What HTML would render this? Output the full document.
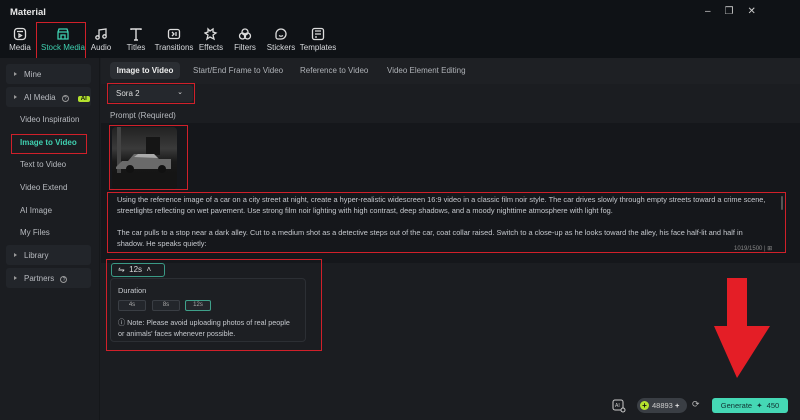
<!DOCTYPE html>
<html><head><meta charset="utf-8"><style>
*{margin:0;padding:0;box-sizing:border-box}
body{width:800px;height:420px;overflow:hidden;background:#1b1d21;font-family:"Liberation Sans",sans-serif;color:#c9ccd1;position:relative;font-size:8px}
.a{position:absolute}
.top{left:0;top:0;width:800px;height:58px;background:#0f1216}
.red{border:1.5px solid #d0202a}
.tb{position:absolute;top:27px;text-align:center;font-size:8px;color:#d8dadd;width:40px}
.tb svg{display:block;margin:0 auto 2px}
.side{left:0;top:58px;width:100px;height:362px;background:#1b1d21;border-right:1px solid #15171a}
.sit{position:absolute;left:6px;width:85px;height:20px;background:#22252a;border-radius:3px;font-size:8px;color:#b8bbc0;padding:6px 0 0 18px}
.sit:before{content:"";position:absolute;left:8px;top:8px;border-left:3px solid #999;border-top:2.5px solid transparent;border-bottom:2.5px solid transparent}
.sl{position:absolute;left:20px;font-size:8px;color:#b8bbc0}
.tab{position:absolute;top:66px;font-size:8px;color:#aeb1b6}
.txt{font-size:7.4px;color:#c6c9ce;line-height:11px;white-space:nowrap}
.db{position:absolute;top:300px;height:11px;width:28px;border:1px solid #3a3e44;border-radius:2px;background:#23262b;font-size:6px;text-align:center;line-height:9px;color:#aaa}
</style></head><body>
<div class="a top"></div>
<div class="a" style="left:10px;top:7px;font-size:9.5px;font-weight:bold;color:#e8e8e8">Material</div>
<div class="a" style="left:705px;top:6px;color:#ccc;font-size:10px;letter-spacing:14px">–❐✕</div>
<div class="tb" style="left:0">
<svg width="14" height="14" viewBox="0 0 14 14" fill="none" stroke="#ddd" stroke-width="1.3"><rect x="1.5" y="1.5" width="11" height="11" rx="3"/><path d="M4 4.5h6M6 7l2.5 1.5L6 10z"/></svg>Media</div>
<div class="tb" style="left:40px;width:46px;color:#3fd0b0">
<svg width="14" height="14" viewBox="0 0 14 14" fill="none" stroke="#3fd0b0" stroke-width="1.3"><path d="M2 5l1-3h8l1 3v7H2zM2 5h10M5 12V8h4v4"/></svg>Stock Media</div>
<div class="a red" style="left:36px;top:22px;width:50px;height:37px"></div>
<div class="tb" style="left:81px">
<svg width="14" height="14" viewBox="0 0 14 14" fill="none" stroke="#ddd" stroke-width="1.3"><path d="M5 10V3l7-1v7"/><circle cx="3.5" cy="10.5" r="1.7"/><circle cx="10.5" cy="9.5" r="1.7"/></svg>Audio</div>
<div class="tb" style="left:116px">
<svg width="14" height="14" viewBox="0 0 14 14" fill="none" stroke="#ddd" stroke-width="1.4"><path d="M2 3V2h10v1M7 2v11M5 13h4"/></svg>Titles</div>
<div class="tb" style="left:153px;width:42px">
<svg width="14" height="14" viewBox="0 0 14 14" fill="none" stroke="#ddd" stroke-width="1.3"><rect x="1.5" y="2.5" width="11" height="9" rx="2"/><path d="M5 5l2 2-2 2M9 5v4"/></svg>Transitions</div>
<div class="tb" style="left:191px">
<svg width="14" height="14" viewBox="0 0 14 14" fill="none" stroke="#ddd" stroke-width="1.3"><path d="M4 2l2 2 3-2v3l3 1-3 2 1 4-4-2-3 2 1-4-3-2 3-1z"/></svg>Effects</div>
<div class="tb" style="left:225px">
<svg width="14" height="14" viewBox="0 0 14 14" fill="none" stroke="#ddd" stroke-width="1.3"><circle cx="7" cy="5" r="3"/><circle cx="4.5" cy="9" r="3"/><circle cx="9.5" cy="9" r="3"/></svg>Filters</div>
<div class="tb" style="left:261px">
<svg width="14" height="14" viewBox="0 0 14 14" fill="none" stroke="#ddd" stroke-width="1.3"><path d="M2 7a5 5 0 1 1 5 5H4a2 2 0 0 1-2-2z"/><path d="M5 8.5q2 1.5 4 0"/></svg>Stickers</div>
<div class="tb" style="left:298px">
<svg width="14" height="14" viewBox="0 0 14 14" fill="none" stroke="#ddd" stroke-width="1.3"><rect x="1.5" y="1.5" width="11" height="11" rx="2"/><path d="M4 4h6M4 7h6M4 10h2"/></svg>Templates</div>

<div class="a side"></div>
<div class="sit" style="top:64px">Mine</div>
<div class="sit" style="top:87px">AI Media <span style="border:1px solid #999;border-radius:50%;display:inline-block;width:7px;height:7px;font-size:5px;text-align:center;line-height:6px;margin-left:4px">?</span><span style="background:#b4e12e;color:#111;font-size:6px;font-weight:bold;border-radius:2px;padding:0 3px;margin-left:9px">AI</span></div>
<div class="sl" style="top:115px">Video Inspiration</div>
<div class="sl" style="top:138px;color:#3fd0b0;font-weight:bold">Image to Video</div>
<div class="a red" style="left:11px;top:134px;width:76px;height:20px"></div>
<div class="sl" style="top:160px">Text to Video</div>
<div class="sl" style="top:183px">Video Extend</div>
<div class="sl" style="top:206px">AI Image</div>
<div class="sl" style="top:228px">My Files</div>
<div class="sit" style="top:245px">Library</div>
<div class="sit" style="top:268px">Partners <span style="border:1px solid #999;border-radius:50%;display:inline-block;width:7px;height:7px;font-size:5px;text-align:center;line-height:6px;margin-left:4px">?</span></div>

<div class="a" style="left:101px;top:58px;width:699px;height:26px;background:#1e2024"></div>
<div class="a" style="left:110px;top:62px;width:70px;height:17px;background:#2b2e33;border-radius:4px;color:#eee;font-weight:bold;font-size:8px;text-align:center;line-height:17px">Image to Video</div>
<div class="tab" style="left:193px">Start/End Frame to Video</div>
<div class="tab" style="left:300px">Reference to Video</div>
<div class="tab" style="left:387px">Video Element Editing</div>
<div class="a" style="left:109px;top:85px;width:84px;height:17px;background:#25282d;border-radius:3px;padding:4px 0 0 7px;font-size:8px;color:#ddd">Sora 2<span style="position:absolute;right:10px;top:3px;font-size:7px">⌄</span></div>
<div class="a red" style="left:107px;top:83px;width:88px;height:21px"></div>
<div class="a" style="left:110px;top:111px;font-size:8px;color:#b8bbc0">Prompt (Required)</div>
<div class="a" style="left:101px;top:123px;width:699px;height:140px;background:#15171b"></div>
<div class="a" style="left:112px;top:127px;width:65px;height:62px;border-radius:4px;overflow:hidden;background:linear-gradient(180deg,#222 0%,#3a3a3a 35%,#1a1a1a 55%,#0e0e0e 100%)">
<svg width="65" height="62" viewBox="0 0 65 62"><rect x="5" y="0" width="4" height="62" fill="#444"/><rect x="34" y="10" width="14" height="18" fill="#151515"/><path d="M4 40l6-6h6l6-7h20l5 5h12v10H4z" fill="#6a6a6a"/><path d="M22 30l4-3h16l4 4z" fill="#aaa"/><circle cx="18" cy="42" r="4" fill="#111"/><circle cx="50" cy="42" r="4" fill="#111"/><rect x="0" y="46" width="65" height="16" fill="#151515"/></svg></div>
<div class="a red" style="left:109px;top:125px;width:79px;height:65px"></div>
<div class="a txt" style="left:117px;top:194px">Using the reference image of a car on a city street at night, create a hyper-realistic widescreen 16:9 video in a classic film noir style. The car drives slowly through empty streets toward a crime scene,<br>streetlights reflecting on wet pavement. Use strong film noir lighting with high contrast, deep shadows, and a moody nighttime atmosphere with light fog.<br><br>The car pulls to a stop near a dark alley. Cut to a medium shot as a detective steps out of the car, coat collar raised. Switch to a close-up as he looks toward the alley, his face half-lit and half in<br>shadow. He speaks quietly:</div>
<div class="a" style="left:781px;top:196px;width:2px;height:14px;background:#555;border-radius:1px"></div>
<div class="a" style="left:734px;top:245px;font-size:6px;color:#888">1019/1500 | ⊞</div>
<div class="a red" style="left:107px;top:192px;width:679px;height:61px"></div>

<div class="a" style="left:111px;top:263px;width:54px;height:14px;border:1px solid #3a9a86;border-radius:3px;font-size:8px;color:#ddd;line-height:12px;padding-left:6px">⇋&nbsp; 12s &nbsp;˄</div>
<div class="a" style="left:110px;top:278px;width:196px;height:64px;border:1px solid #2c2f34;border-radius:4px;background:#1d1f23"></div>
<div class="a" style="left:118px;top:286px;font-size:7.5px;color:#c6c9ce">Duration</div>
<div class="db" style="left:118px">4s</div>
<div class="db" style="left:152px">8s</div>
<div class="db" style="left:185px;width:26px;border-color:#3fa08a">12s</div>
<div class="a txt" style="left:118px;top:317px;font-size:7.2px">ⓘ Note: Please avoid uploading photos of real people<br>or animals' faces whenever possible.</div>
<div class="a red" style="left:106px;top:259px;width:216px;height:92px"></div>

<svg class="a" style="left:712px;top:276px" width="64" height="104" viewBox="0 0 64 104"><path d="M15 2h20v48h23L25 102 2 50h13z" fill="#e41e26"/></svg>

<svg class="a" style="left:612px;top:399px" width="14" height="14" viewBox="0 0 14 14" fill="none" stroke="#ccc" stroke-width="1"><rect x="1" y="1" width="10" height="10" rx="2"/><text x="3" y="8" font-size="5" fill="#ccc" stroke="none" font-family="Liberation Sans">AI</text><circle cx="11" cy="11" r="2" fill="#1b1d21"/></svg>
<div class="a" style="left:637px;top:398px;width:50px;height:15px;background:#3a3e44;border-radius:8px;font-size:7.5px;color:#ccc;line-height:15px;padding-left:15px">48893 <b style="color:#eee">+</b></div>
<div class="a" style="left:640px;top:401px;width:9px;height:9px;border-radius:50%;background:#b4e12e;color:#111;font-size:8px;line-height:9px;text-align:center;font-weight:bold">+</div>
<div class="a" style="left:692px;top:399px;font-size:9px;color:#bbb">⟳</div>
<div class="a" style="left:712px;top:398px;width:76px;height:15px;background:#45d8b5;border-radius:3px;font-size:7.5px;color:#133;line-height:15px;text-align:center">Generate &nbsp;✦&nbsp; 450</div>
</body></html>
